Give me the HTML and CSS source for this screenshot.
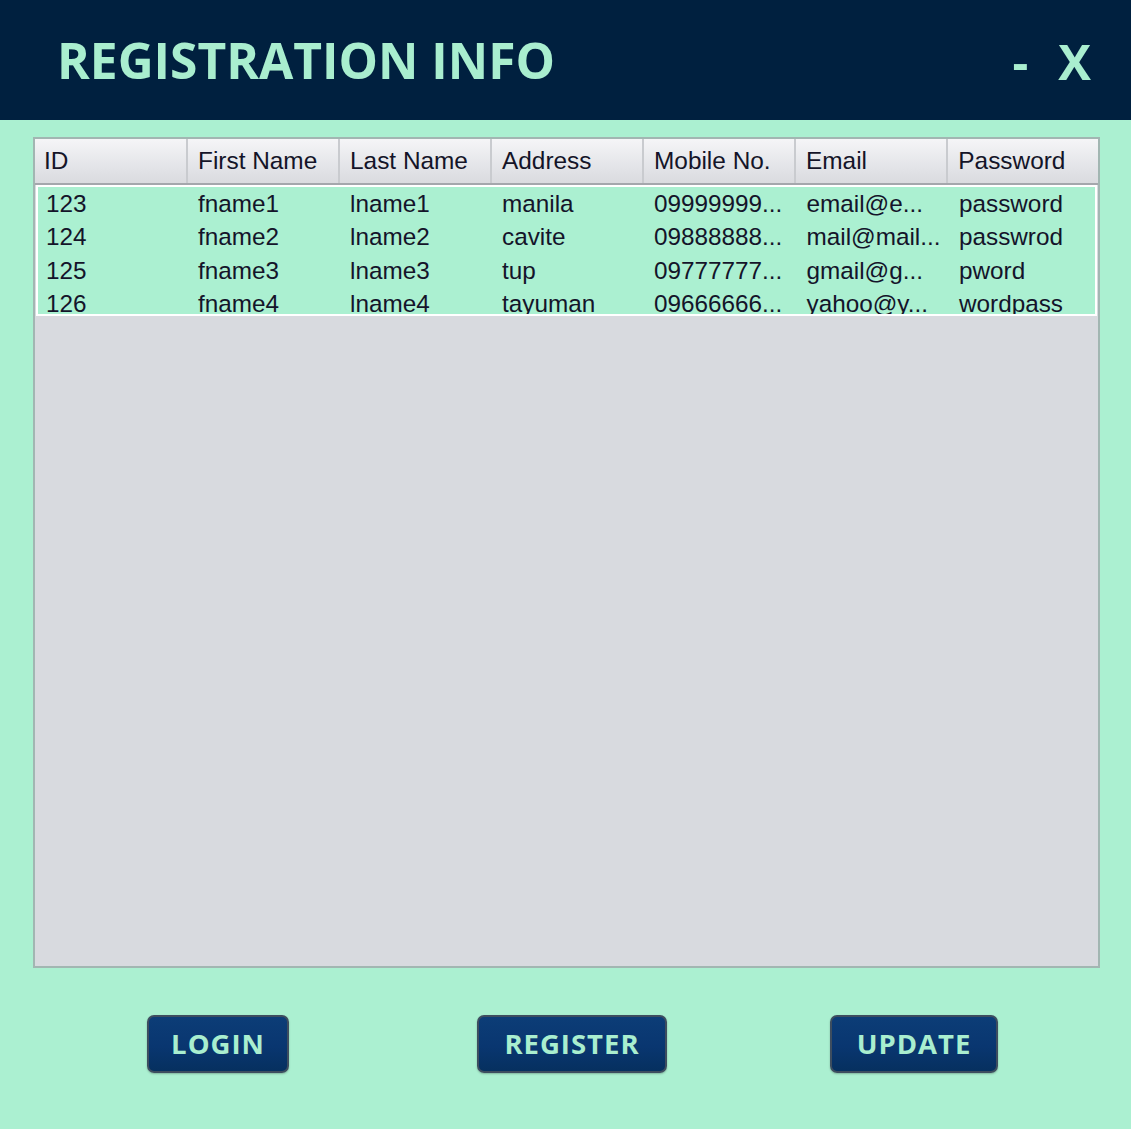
FILE: index.html
```html
<!DOCTYPE html>
<html>
<head>
<meta charset="utf-8">
<link rel="stylesheet" href="styles.css">
</head>
<body>
<div class="app">
  <header class="topbar">
    <h1 class="title">REGISTRATION INFO</h1>
    <div class="controls">
      <span class="ctl min">-</span>
      <span class="ctl close">X</span>
    </div>
  </header>
  <main class="content">
    <div class="table">
      <div class="thead">
        <div class="th">ID</div>
        <div class="th">First Name</div>
        <div class="th">Last Name</div>
        <div class="th">Address</div>
        <div class="th">Mobile No.</div>
        <div class="th">Email</div>
        <div class="th">Password</div>
      </div>
      <div class="tbody">
        <div class="tr"><div class="td">123</div><div class="td">fname1</div><div class="td">lname1</div><div class="td">manila</div><div class="td">09999999...</div><div class="td">email@e...</div><div class="td">password</div></div>
        <div class="tr"><div class="td">124</div><div class="td">fname2</div><div class="td">lname2</div><div class="td">cavite</div><div class="td">09888888...</div><div class="td">mail@mail...</div><div class="td">passwrod</div></div>
        <div class="tr"><div class="td">125</div><div class="td">fname3</div><div class="td">lname3</div><div class="td">tup</div><div class="td">09777777...</div><div class="td">gmail@g...</div><div class="td">pword</div></div>
        <div class="tr"><div class="td">126</div><div class="td">fname4</div><div class="td">lname4</div><div class="td">tayuman</div><div class="td">09666666...</div><div class="td">yahoo@y...</div><div class="td">wordpass</div></div>
      </div>
    </div>
    <div class="actions">
      <button class="btn login">LOGIN</button>
      <button class="btn register">REGISTER</button>
      <button class="btn update">UPDATE</button>
    </div>
  </main>
</div>
</body>
</html>
```
FILE: styles.css
```css
* { box-sizing: border-box; }
html, body { margin: 0; padding: 0; }
body {
  background: #abf0d1;
  width: 1131px;
  height: 1129px;
  overflow: hidden;
}
.app { width: 1131px; }
.topbar {
  height: 120px;
  background: #00203f;
  display: flex;
  align-items: center;
  justify-content: space-between;
  padding: 2px 40px 0 57px;
}
.title {
  margin: 0;
  font-family: "Open Sans", "DejaVu Sans", sans-serif;
  font-weight: 700;
  font-size: 49.7px;
  line-height: 1;
  color: #a9eecf;
  letter-spacing: 0;
}
.controls {
  display: flex;
  align-items: center;
  gap: 30px;
  font-family: "Open Sans", "DejaVu Sans", sans-serif;
  font-weight: 700;
  font-size: 49px;
  line-height: 1;
  color: #a9eecf;
}
.content {
  padding: 17px 31px 0 33px;
}
.table {
  width: 1067px;
  height: 831px;
  border: 2px solid #a2b6b2;
  background: #d8dadf;
  overflow: hidden;
}
.thead {
  display: grid;
  grid-template-columns: 151px 152px 152px 152px 152px 152.3px 152px;
  height: 46px;
  border-bottom: 2px solid #a4a7ac;
  background: linear-gradient(#f5f5f7, #e4e5e9 60%, #dadbdf);
}
.th {
  font-family: "Liberation Sans", Arial, sans-serif;
  font-size: 24.4px;
  color: #141428;
  padding-left: 10px;
  line-height: 44px;
  border-left: 2px solid #c9cbcf;
  white-space: nowrap;
  overflow: hidden;
}
.th:first-child { border-left: none; padding-left: 9px; }
.tbody {
  height: 131px;
  border: 2px solid #ffffff;
  background: #abf0d1;
  overflow: hidden;
  margin: 0 1px;
}
.tr {
  display: grid;
  grid-template-columns: 152px 152px 152px 152px 152.5px 152.5px 152px;
  height: 33.4px;
}
.td {
  font-family: "Liberation Sans", Arial, sans-serif;
  font-size: 24.3px;
  color: #14142a;
  line-height: 33.4px;
  padding-left: 8px;
  white-space: nowrap;
  overflow: hidden;
}
.actions {
  display: flex;
  align-items: center;
  padding: 47px 0 0 114px;
}
.btn {
  height: 58px;
  border: 2px solid #3d4d5f;
  border-radius: 7px;
  background: linear-gradient(#0c3d77, #093670 55%, #06305f);
  color: #a9eecf;
  font-family: "Open Sans", "DejaVu Sans", sans-serif;
  font-weight: 700;
  font-size: 27.5px;
  letter-spacing: 1px;
  line-height: 1;
  padding: 0;
  box-shadow: 0 1px 2px rgba(0,0,0,0.25);
}
.login { width: 142px; }
.register { width: 190px; margin-left: 188px; }
.update { width: 168px; margin-left: 163px; }
```
